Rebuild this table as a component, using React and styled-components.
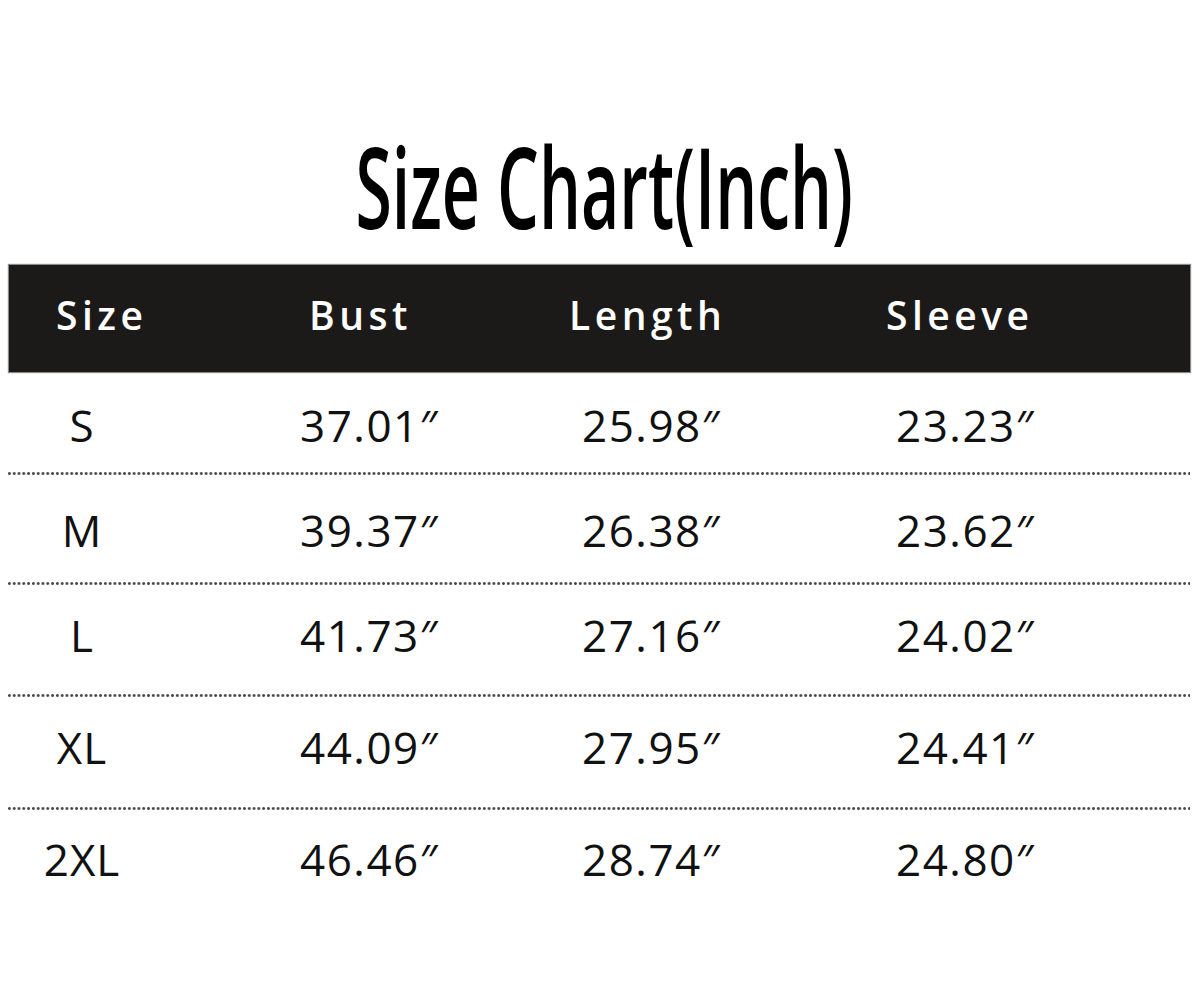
import React from 'react';
import styled, { createGlobalStyle } from 'styled-components';

const GlobalStyle = createGlobalStyle`
  body {
    margin: 0;
    background: #fff;
    font-family: "Open Sans", "Liberation Sans", sans-serif;
  }
`;

const Page = styled.div`
  width: 1200px;
  height: 1001px;
  padding: 0 10px 0 7px;
  box-sizing: border-box;
  background: #fff;
  overflow: hidden;
`;

const TitleWrap = styled.div`
  height: 265px;
  display: flex;
  align-items: flex-start;
  justify-content: center;
  padding-top: 129px;
  padding-left: 11px;
  box-sizing: border-box;
`;

const Title = styled.h1`
  margin: 0;
  font-size: 113px;
  font-weight: 600;
  line-height: 1;
  color: #000;
  white-space: nowrap;
  transform: scaleX(0.585);
  transform-origin: center top;
`;

const HeaderBar = styled.div`
  margin-left: 2px;
  height: 107px;
  background: #1c1a19;
  box-shadow: 0 0 1px 1px #8a8a8a;
  display: grid;
  grid-template-columns: 253px 260px 317px 1fr;
  align-items: center;
  padding-left: 47px;
  box-sizing: border-box;
`;

const HeadCell = styled.div`
  color: #fff;
  font-size: 39px;
  font-weight: 600;
  letter-spacing: 4.5px;
  padding-bottom: 8px;
  white-space: nowrap;
`;

const Row = styled.div`
  height: ${p => p.$h}px;
  display: grid;
  grid-template-columns: 150px 282px 314px 1fr;
  align-items: center;
  padding-top: ${p => Math.max(p.$shift, 0)}px;
  padding-bottom: ${p => Math.max(-p.$shift, 0)}px;
  box-sizing: border-box;
`;

const Dots = styled.div`
  height: 3px;
  background-image: radial-gradient(circle, #4a4a4a 1.2px, transparent 1.6px);
  background-size: 4.8px 3px;
  background-repeat: repeat-x;
`;

const SizeCell = styled.div`
  text-align: center;
  font-size: 44px;
  color: #111;
  letter-spacing: 1px;
`;

const ValueCell = styled.div`
  padding-left: 143px;
  font-size: 44px;
  color: #111;
  letter-spacing: 1.5px;
  white-space: nowrap;
`;

const rows = [
  { size: 'S', bust: '37.01″', length: '25.98″', sleeve: '23.23″', h: 100, shift: 6 },
  { size: 'M', bust: '39.37″', length: '26.38″', sleeve: '23.62″', h: 107, shift: 3 },
  { size: 'L', bust: '41.73″', length: '27.16″', sleeve: '24.02″', h: 109, shift: -9 },
  { size: 'XL', bust: '44.09″', length: '27.95″', sleeve: '24.41″', h: 110, shift: -10 },
  { size: '2XL', bust: '46.46″', length: '28.74″', sleeve: '24.80″', h: 110, shift: -12 },
];

const App = () => {
  return (
    <Page>
      <GlobalStyle />
      <TitleWrap>
        <Title>Size Chart(Inch)</Title>
      </TitleWrap>
      <HeaderBar>
        <HeadCell>Size</HeadCell>
        <HeadCell>Bust</HeadCell>
        <HeadCell>Length</HeadCell>
        <HeadCell>Sleeve</HeadCell>
      </HeaderBar>
      {rows.map((r, i) => (
        <React.Fragment key={r.size}>
          <Row $h={r.h} $shift={r.shift}>
            <SizeCell>{r.size}</SizeCell>
            <ValueCell>{r.bust}</ValueCell>
            <ValueCell>{r.length}</ValueCell>
            <ValueCell>{r.sleeve}</ValueCell>
          </Row>
          {i < rows.length - 1 && <Dots />}
        </React.Fragment>
      ))}
    </Page>
  );
};

export default App;
